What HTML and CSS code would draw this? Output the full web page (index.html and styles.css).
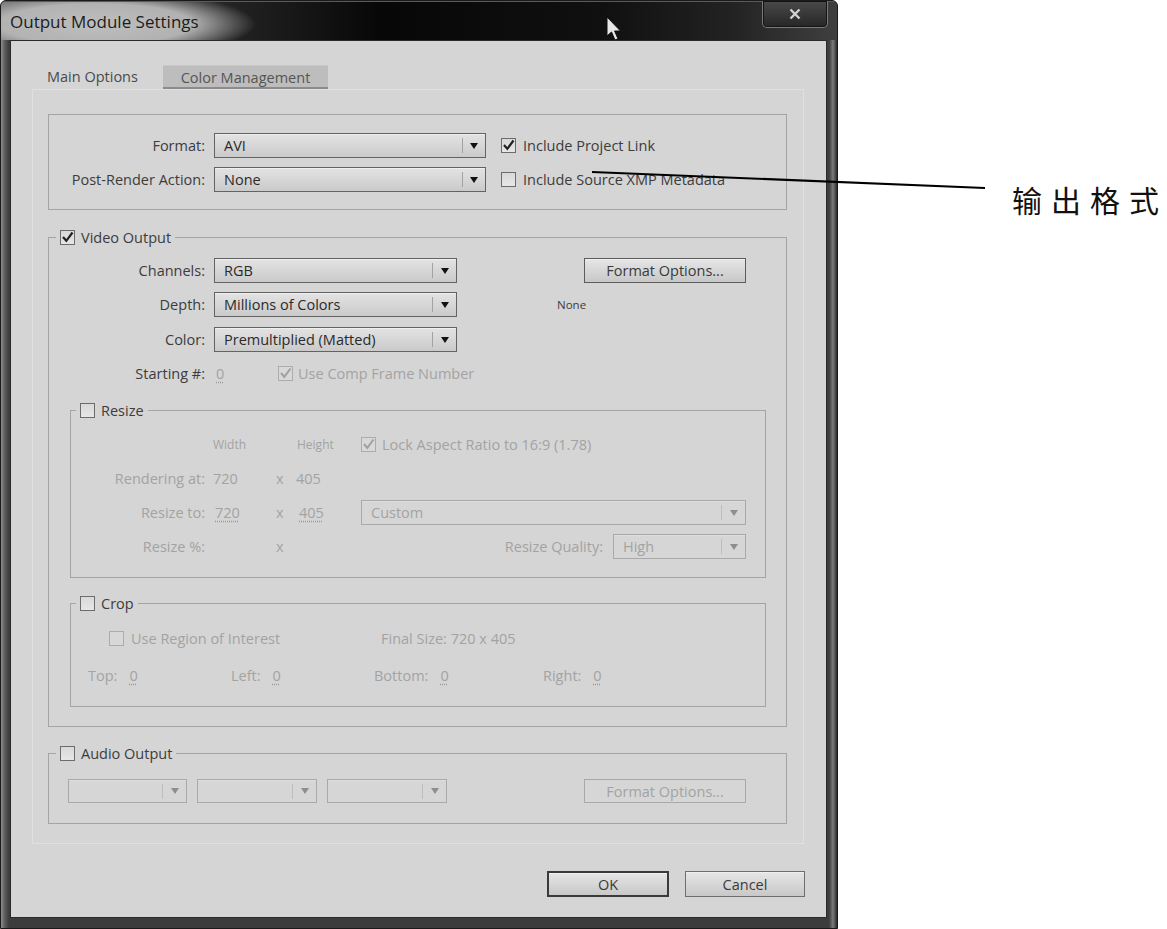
FILE: index.html
```html
<!DOCTYPE html>
<html>
<head>
<meta charset="utf-8">
<title>Output Module Settings</title>
<link rel="stylesheet" href="styles.css">
</head>
<body>
<div class="page">
  <div class="window">
    <div class="titlebar">
      <span class="title">Output Module Settings</span>
      <div class="close"><svg width="14" height="12" viewBox="0 0 14 12"><path d="M2.5 1.5 L11.5 10.5 M11.5 1.5 L2.5 10.5" stroke="#d2d2d2" stroke-width="2.4" fill="none"/></svg></div>
    </div>
    <div class="frame">
      <div class="client">
        <div class="tabs">
          <div class="tab tab-active">Main Options</div>
          <div class="tab tab-inactive">Color Management</div>
        </div>
        <div class="panel">
          <div class="box">
            <div class="row">
              <span class="lbl">Format:</span>
              <div class="sel w-fmt"><span class="sel-text">AVI</span><span class="sel-btn"><i class="tri"></i></span></div>
              <span class="cb cb-first"><svg viewBox="0 0 15 15" width="15" height="15"><path d="M3 7 L6.3 10.8 L12.5 2.5" fill="none" stroke="#222" stroke-width="2.2"/></svg></span>
              <span class="cb-text">Include Project Link</span>
            </div>
            <div class="row row-gap9">
              <span class="lbl">Post-Render Action:</span>
              <div class="sel w-fmt"><span class="sel-text">None</span><span class="sel-btn"><i class="tri"></i></span></div>
              <span class="cb cb-first"></span>
              <span class="cb-text">Include Source XMP Metadata</span>
            </div>
          </div>

          <fieldset class="group g-video">
            <legend class="lg"><span class="cb"><svg viewBox="0 0 15 15" width="15" height="15"><path d="M3 7 L6.3 10.8 L12.5 2.5" fill="none" stroke="#222" stroke-width="2.2"/></svg></span><span class="lg-text">Video Output</span></legend>
            <div class="vbody">
              <div class="row">
                <span class="lbl">Channels:</span>
                <div class="sel w-vid"><span class="sel-text">RGB</span><span class="sel-btn"><i class="tri"></i></span></div>
                <div class="btn btn-fmt">Format Options...</div>
              </div>
              <div class="row row-gap9">
                <span class="lbl">Depth:</span>
                <div class="sel w-vid"><span class="sel-text">Millions of Colors</span><span class="sel-btn"><i class="tri"></i></span></div>
                <span class="none-note">None</span>
              </div>
              <div class="row row-gap10">
                <span class="lbl">Color:</span>
                <div class="sel w-vid"><span class="sel-text">Premultiplied (Matted)</span><span class="sel-btn"><i class="tri"></i></span></div>
              </div>
              <div class="row row-gap9">
                <span class="lbl">Starting #:</span>
                <span class="val-start dis"><span class="uval">0</span></span>
                <span class="cb cb-dis"><svg viewBox="0 0 15 15" width="15" height="15"><path d="M3 7 L6.3 10.8 L12.5 2.5" fill="none" stroke="#a0a0a0" stroke-width="2"/></svg></span>
                <span class="cb-text dis gap5">Use Comp Frame Number</span>
              </div>

              <fieldset class="group g-sub g-resize">
                <legend class="lg lg-sub"><span class="cb"></span><span class="lg-text">Resize</span></legend>
                <div class="rbody">
                  <span></span><span></span>
                  <span class="small dis">Width</span>
                  <span></span>
                  <span class="small dis pl1">Height</span>
                  <span class="cell-flex"><span class="cb cb-dis"><svg viewBox="0 0 15 15" width="15" height="15"><path d="M3 7 L6.3 10.8 L12.5 2.5" fill="none" stroke="#a0a0a0" stroke-width="2"/></svg></span><span class="cb-text dis gap6">Lock Aspect Ratio to 16:9 (1.78)</span></span>

                  <span class="rlbl dis">Rendering at:</span><span></span>
                  <span class="dis">720</span>
                  <span class="dis xcell">x</span>
                  <span class="dis">405</span>
                  <span></span>

                  <span class="rlbl dis">Resize to:</span><span></span>
                  <span class="dis pl2"><span class="uval">720</span></span>
                  <span class="dis xcell">x</span>
                  <span class="dis pl3"><span class="uval">405</span></span>
                  <div class="sel sel-dis"><span class="sel-text">Custom</span><span class="sel-btn"><i class="tri"></i></span></div>

                  <span class="rlbl dis">Resize %:</span><span></span>
                  <span></span>
                  <span class="dis xcell">x</span>
                  <span></span>
                  <span class="cell-flex cell-end"><span class="dis">Resize Quality:</span><div class="sel sel-dis w-q"><span class="sel-text">High</span><span class="sel-btn"><i class="tri"></i></span></div></span>
                </div>
              </fieldset>

              <fieldset class="group g-sub g-crop">
                <legend class="lg lg-sub"><span class="cb"></span><span class="lg-text">Crop</span></legend>
                <div class="cbody">
                  <div class="crow">
                    <span class="roi"><span class="cb cb-dis"></span><span class="cb-text dis gap7">Use Region of Interest</span></span>
                    <span class="dis">Final Size: 720 x 405</span>
                  </div>
                  <div class="crow2">
                    <span class="cell-flex"><span class="dis">Top:</span><span class="dis cval"><span class="uval">0</span></span></span>
                    <span class="cell-flex"><span class="dis">Left:</span><span class="dis cval"><span class="uval">0</span></span></span>
                    <span class="cell-flex"><span class="dis">Bottom:</span><span class="dis cval"><span class="uval">0</span></span></span>
                    <span class="cell-flex"><span class="dis">Right:</span><span class="dis cval"><span class="uval">0</span></span></span>
                  </div>
                </div>
              </fieldset>
            </div>
          </fieldset>

          <fieldset class="group g-audio">
            <legend class="lg"><span class="cb"></span><span class="lg-text">Audio Output</span></legend>
            <div class="abody">
              <div class="sel sel-dis w-a1"><span class="sel-text"></span><span class="sel-btn"><i class="tri"></i></span></div>
              <div class="sel sel-dis w-a2"><span class="sel-text"></span><span class="sel-btn"><i class="tri"></i></span></div>
              <div class="sel sel-dis w-a2"><span class="sel-text"></span><span class="sel-btn"><i class="tri"></i></span></div>
              <div class="btn btn-fmt btn-dis">Format Options...</div>
            </div>
          </fieldset>
        </div>
        <div class="buttons">
          <div class="btn btn-ok">OK</div>
          <div class="btn btn-cancel">Cancel</div>
        </div>
      </div>
    </div>
  </div>
  <div class="annot">输出格式</div>
</div>
<svg class="overlay" width="1167" height="929" viewBox="0 0 1167 929">
  <line x1="592" y1="172" x2="985" y2="188" stroke="#000" stroke-width="2.2"/>
  <path d="M607 17 L607 36 L611.5 32 L615 40 L618 38.8 L614.6 31 L620.5 31 Z" fill="#e8e8e8" stroke="#111" stroke-width="1"/>
</svg>
</body>
</html>
```

FILE: styles.css
```css
* { box-sizing: border-box; }
html, body { margin: 0; padding: 0; background: #ffffff; }
body {
  width: 1167px;
  height: 929px;
  overflow: hidden;
  position: relative;
  font-family: "Open Sans", "Noto Sans", sans-serif;
  font-size: 14.5px;
  color: #3a3a3a;
}
.page { display: flex; align-items: flex-start; }

/* ---------- window chrome ---------- */
.window {
  width: 838px;
  height: 929px;
  flex: none;
  display: flex;
  flex-direction: column;
  border: 1px solid #1a1a1a;
  border-radius: 6px 6px 0 0;
  background: #3a3a3a;
  overflow: hidden;
}
.titlebar {
  height: 39px;
  flex: none;
  display: flex;
  align-items: flex-start;
  justify-content: space-between;
  background:
    radial-gradient(ellipse 160px 34px at 95px 22px, rgba(190,190,190,1) 0, rgba(184,184,184,0.95) 60%, rgba(140,140,140,0) 100%),
    linear-gradient(to right, #5a5a5a 0, #222 235px, #070707 380px, #101010 600px, #222 730px, #404040 838px);
  border-top: 1px solid #5a5a5a;
}
.title {
  padding: 7px 0 0 9px;
  font-size: 17px;
  line-height: 26px;
  color: #1c1c1c;
}
.close {
  width: 66px;
  height: 27px;
  margin-right: 9px;
  margin-top: -1px;
  border: 1px solid #7a7a7a;
  border-top: none;
  border-radius: 0 0 5px 5px;
  background: linear-gradient(#4a4a4a, #262626);
  box-shadow: inset 0 0 0 1px #141414;
  display: flex;
  align-items: center;
  justify-content: center;
}
.frame {
  flex: 1;
  display: flex;
  padding: 0 10px 10px 9px;
  background: linear-gradient(to right, #8c8c8c 0, #5a5a5a 4px, #3c3c3c 8px, #3c3c3c 828px, #7c7c7c 832px, #2a2a2a 836px);
}
.client {
  width: 817px;
  flex: none;
  display: flex;
  flex-direction: column;
  border: 1px solid #2a2a2a;
  background: #d5d5d5;
  padding: 24px 0 0 21px;
}

/* ---------- tabs ---------- */
.tabs { display: flex; height: 24px; flex: none; }
.tab { height: 24px; line-height: 23px; color: #4a4a4a; }
.tab-active { width: 131px; padding-left: 15px; }
.tab-inactive {
  width: 165px;
  text-align: center;
  background: #bdbdbd;
  border-bottom: 2px solid #8c8c8c;
  border-top: 1px solid #c8c8c8;
  color: #555;
}
.panel {
  width: 772px;
  height: 755px;
  flex: none;
  border: 1px solid #e0e0e0;
  padding: 24px 16px 19px 15px;
}

/* ---------- generic controls ---------- */
.row { display: flex; align-items: center; height: 25px; }
.row-gap9 { margin-top: 9px; }
.row-gap10 { margin-top: 10px; }
.lbl { width: 156px; text-align: right; flex: none; color: #3c3c3c; }
.sel {
  display: flex;
  align-items: center;
  height: 25px;
  flex: none;
  border: 1px solid #636363;
  background: linear-gradient(#e3e3e3, #cacaca);
  box-shadow: inset 0 1px 0 #efefef;
  color: #2a2a2a;
}
.lbl + .sel { margin-left: 9px; }
.sel-text { flex: 1; padding-left: 9px; white-space: nowrap; overflow: hidden; }
.sel-btn {
  width: 24px;
  height: 15px;
  flex: none;
  border-left: 1px solid #a2a2a2;
  display: flex;
  align-items: center;
  justify-content: center;
}
.tri {
  width: 0; height: 0;
  border-left: 4px solid transparent;
  border-right: 4px solid transparent;
  border-top: 6px solid #111;
}
.sel-dis {
  border-color: #a9a9a9;
  background: #d6d6d6;
  box-shadow: inset 0 1px 0 #dedede;
  color: #a3a3a3;
}
.sel-dis .sel-btn { border-left-color: #bdbdbd; }
.sel-dis .tri { border-top-color: #8e8e8e; }
.w-fmt { width: 272px; }
.w-fmt .sel-btn { width: 23px; }
.w-vid { width: 243px; }
.w-q { width: 133px; margin-left: 10px; }
.w-a1 { width: 119px; }
.w-a2 { width: 120px; margin-left: 10px; }

.cb {
  width: 15px;
  height: 15px;
  flex: none;
  border: 1px solid #6c6c6c;
  background: linear-gradient(#d9d9d9, #e6e6e6);
  display: flex;
  align-items: center;
  justify-content: center;
  overflow: visible;
}
.cb svg { flex: none; margin: -1px; }
.cb-dis { border-color: #acacac; background: #d8d8d8; }
.cb-first { margin-left: 15px; }
.cb-text { margin-left: 7px; white-space: nowrap; color: #3c3c3c; }
.gap5 { margin-left: 5px; }
.gap6 { margin-left: 6px; }
.gap7 { margin-left: 7px; }
.dis { color: #a3a3a3; }
.cb-text.dis { color: #a3a3a3; }
.uval {
  text-decoration: underline dotted #9a9a9a;
  text-underline-offset: 3px;
}
.small { font-size: 12px; }
.pl1 { padding-left: 1px; }
.pl2 { padding-left: 2px; }
.pl3 { padding-left: 3px; }

.btn {
  height: 25px;
  flex: none;
  border: 1px solid #5c5c5c;
  background: linear-gradient(#e6e6e6, #c8c8c8);
  box-shadow: inset 0 1px 0 #f0f0f0;
  display: flex;
  align-items: center;
  justify-content: center;
  color: #3a3a3a;
  white-space: nowrap;
}
.btn-fmt { width: 162px; margin-left: 127px; }
.btn-dis {
  border-color: #a9a9a9;
  background: #d6d6d6;
  box-shadow: none;
  color: #a3a3a3;
}

/* ---------- group boxes ---------- */
.box {
  height: 96px;
  border: 1px solid #a4a4a4;
  padding-top: 18px;
}
.group {
  margin: 0;
  padding: 0;
  min-width: 0;
  border: 1px solid #a4a4a4;
}
.lg {
  display: flex;
  align-items: center;
  height: 16px;
  padding: 0 4px;
  margin-left: 7px;
  color: #3c3c3c;
}
.lg-sub { margin-left: 5px; }
.lg-text { margin-left: 6px; white-space: nowrap; }
.g-video { margin-top: 19px; }
.vbody { padding: 13px 0 19px 0; }
.none-note { margin-left: 100px; font-size: 11.5px; color: #3c3c3c; }
.val-start { width: 64px; margin-left: 9px; padding-left: 2px; flex: none; }

.g-sub { margin-left: 21px; margin-right: 20px; }
.g-resize { margin-top: 16px; }
.rbody {
  display: grid;
  grid-template-columns: 134px 8px 55px 28px 65px 1fr;
  grid-auto-rows: 25px;
  row-gap: 9px;
  align-items: center;
  padding: 14px 19px 18px 0;
}
.rlbl { text-align: right; white-space: nowrap; }
.xcell { padding-left: 8px; }
.cell-flex { display: flex; align-items: center; }
.cell-end { justify-content: flex-end; }

.g-crop { margin-top: 17px; }
.cbody { padding: 15px 0 18px 0; }
.crow { display: flex; align-items: center; height: 25px; }
.roi { display: flex; align-items: center; width: 272px; margin-left: 38px; flex: none; }
.crow2 {
  display: grid;
  grid-template-columns: 143px 143px 169px 1fr;
  height: 25px;
  margin-top: 12px;
  padding-left: 17px;
  align-items: center;
}
.cval { margin-left: 12px; }

.g-audio { margin-top: 18px; }
.abody { display: flex; align-items: center; padding: 18px 0 20px 19px; }
.abody .sel { height: 24px; }
.abody .btn { height: 24px; margin-left: 137px; }

/* ---------- bottom buttons ---------- */
.buttons {
  display: flex;
  justify-content: flex-end;
  margin-top: 27px;
  padding-right: 21px;
}
.btn-ok { width: 122px; height: 26px; border: 2px solid #3a3a3a; }
.btn-cancel { width: 120px; height: 26px; margin-left: 16px; border-color: #6e6e6e; }

/* ---------- annotation ---------- */
.annot {
  flex: none;
  margin-left: 174px;
  margin-top: 180px;
  font-family: "Noto Sans CJK SC", sans-serif;
  font-size: 30px;
  line-height: 38px;
  letter-spacing: 9px;
  color: #111;
  white-space: nowrap;
}
.overlay {
  position: absolute;
  left: 0;
  top: 0;
  pointer-events: none;
}
```
